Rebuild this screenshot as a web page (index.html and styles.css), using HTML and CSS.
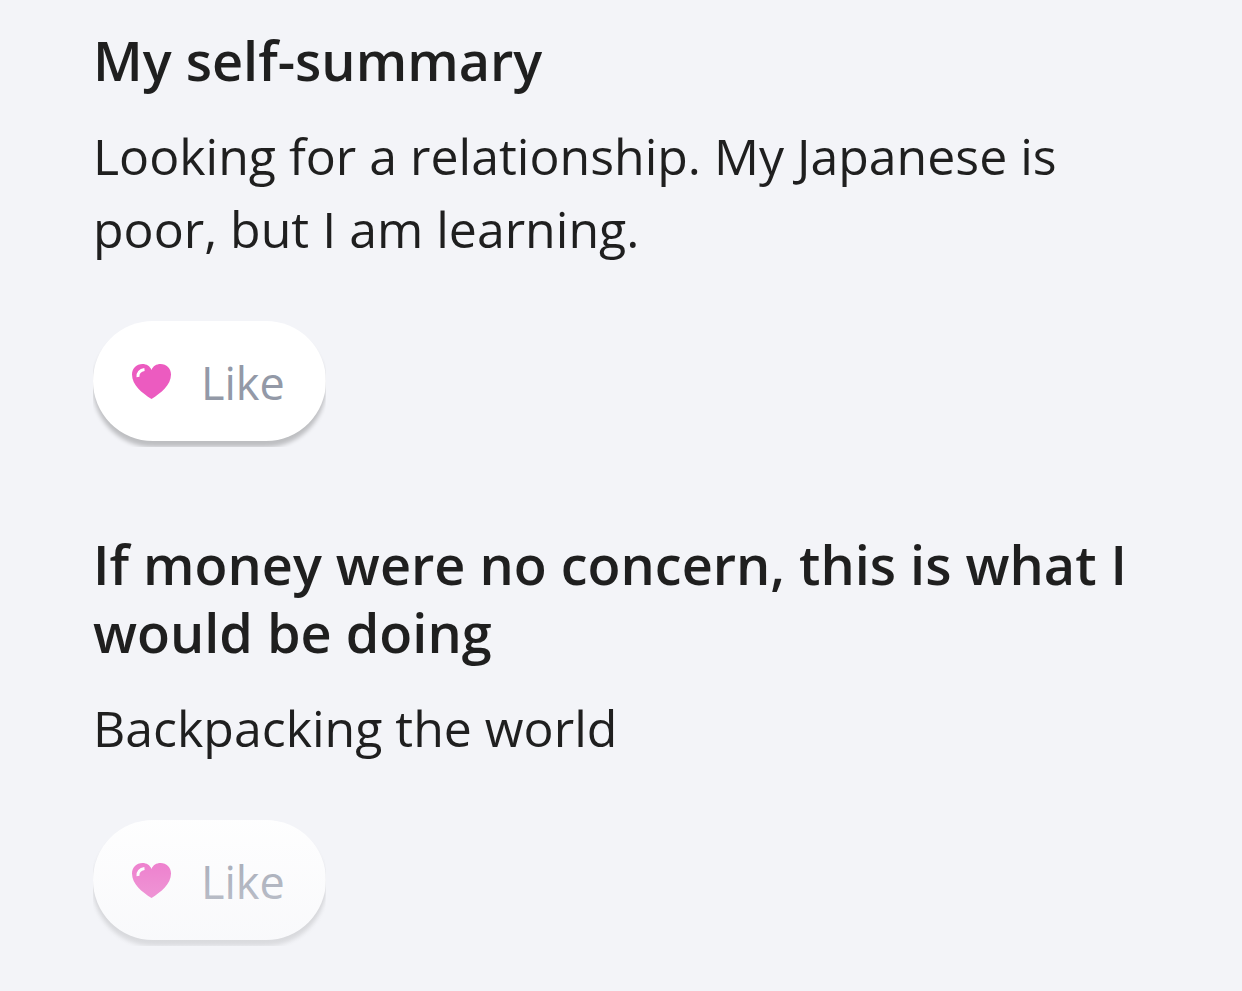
FILE: index.html
```html
<!DOCTYPE html>
<html lang="en">
<head>
    <meta charset="UTF-8">
    <meta name="viewport" content="width=device-width, initial-scale=1.0">
    <title>Profile</title>
    <link rel="stylesheet" href="styles.css">
</head>
<body>
    <main class="profile">
        <section class="essay">
            <h2>My self-summary</h2>
            <p>Looking for a relationship. My Japanese is poor, but I am learning.</p>
            <button type="button" class="like">
                <svg class="heart" viewBox="0 0 39 35" aria-hidden="true">
                    <path class="heart-shape" d="M19.5 6C18 2 14.500 0 10.500 0C4.500 0 0 4.500 0 10.500C0 21 10 29 19.500 35C29 29 39 21 39 10.500C39 4.500 34.500 0 28.500 0C24.500 0 21 2 19.500 6Z"/>
                    <path class="heart-shine" d="M6 13C5.500 9 8 6 12.500 5.500"/>
                </svg>
                <span>Like</span>
            </button>
        </section>

        <section class="essay">
            <h2>If money were no concern, this is what I would be doing</h2>
            <p>Backpacking the world</p>
            <button type="button" class="like">
                <svg class="heart" viewBox="0 0 39 35" aria-hidden="true">
                    <path class="heart-shape" d="M19.5 6C18 2 14.500 0 10.500 0C4.500 0 0 4.500 0 10.500C0 21 10 29 19.500 35C29 29 39 21 39 10.500C39 4.500 34.500 0 28.500 0C24.500 0 21 2 19.500 6Z"/>
                    <path class="heart-shine" d="M6 13C5.500 9 8 6 12.500 5.500"/>
                </svg>
                <span>Like</span>
            </button>
        </section>

        <div class="fade"></div>
    </main>
</body>
</html>
```
FILE: styles.css
```css
body {
    margin: 0;
    background: #f3f4f8;
    color: #1f1f1f;
    font-family: "Open Sans", "Liberation Sans", sans-serif;
}

.profile {
    position: relative;
    padding: 26px 93px 51px;
}

.essay + .essay {
    margin-top: 89px;
}

h2 {
    margin: 0;
    font-size: 54px;
    line-height: 68px;
    font-weight: 600;
}

p {
    margin: 26px 0 55px;
    font-size: 50px;
    line-height: 73px;
}

.like {
    display: flex;
    align-items: center;
    gap: 30px;
    height: 120px;
    padding: 0 41px 0 39px;
    border: none;
    border-radius: 60px;
    background: white;
    color: #9399a7;
    font-family: inherit;
    font-size: 45px;
    box-shadow: 0 6px 4px rgba(0, 0, 0, 0.22);
    /* keep the shadow inside the sides of the pill */
    clip-path: inset(0 0 -6px 0);
}

.like span {
    padding-top: 2px;
}

.heart {
    width: 39px;
    height: 35px;
}

.heart-shape {
    fill: #ec5bc0;
}

.heart-shine {
    fill: none;
    stroke: white;
    stroke-width: 3;
}

/* bottom of the profile fades into the background */
.fade {
    position: absolute;
    left: 0;
    right: 0;
    bottom: 0;
    height: 200px;
    background: linear-gradient(rgba(243, 244, 248, 0), rgba(243, 244, 248, 0.7));
    pointer-events: none;
}
```
